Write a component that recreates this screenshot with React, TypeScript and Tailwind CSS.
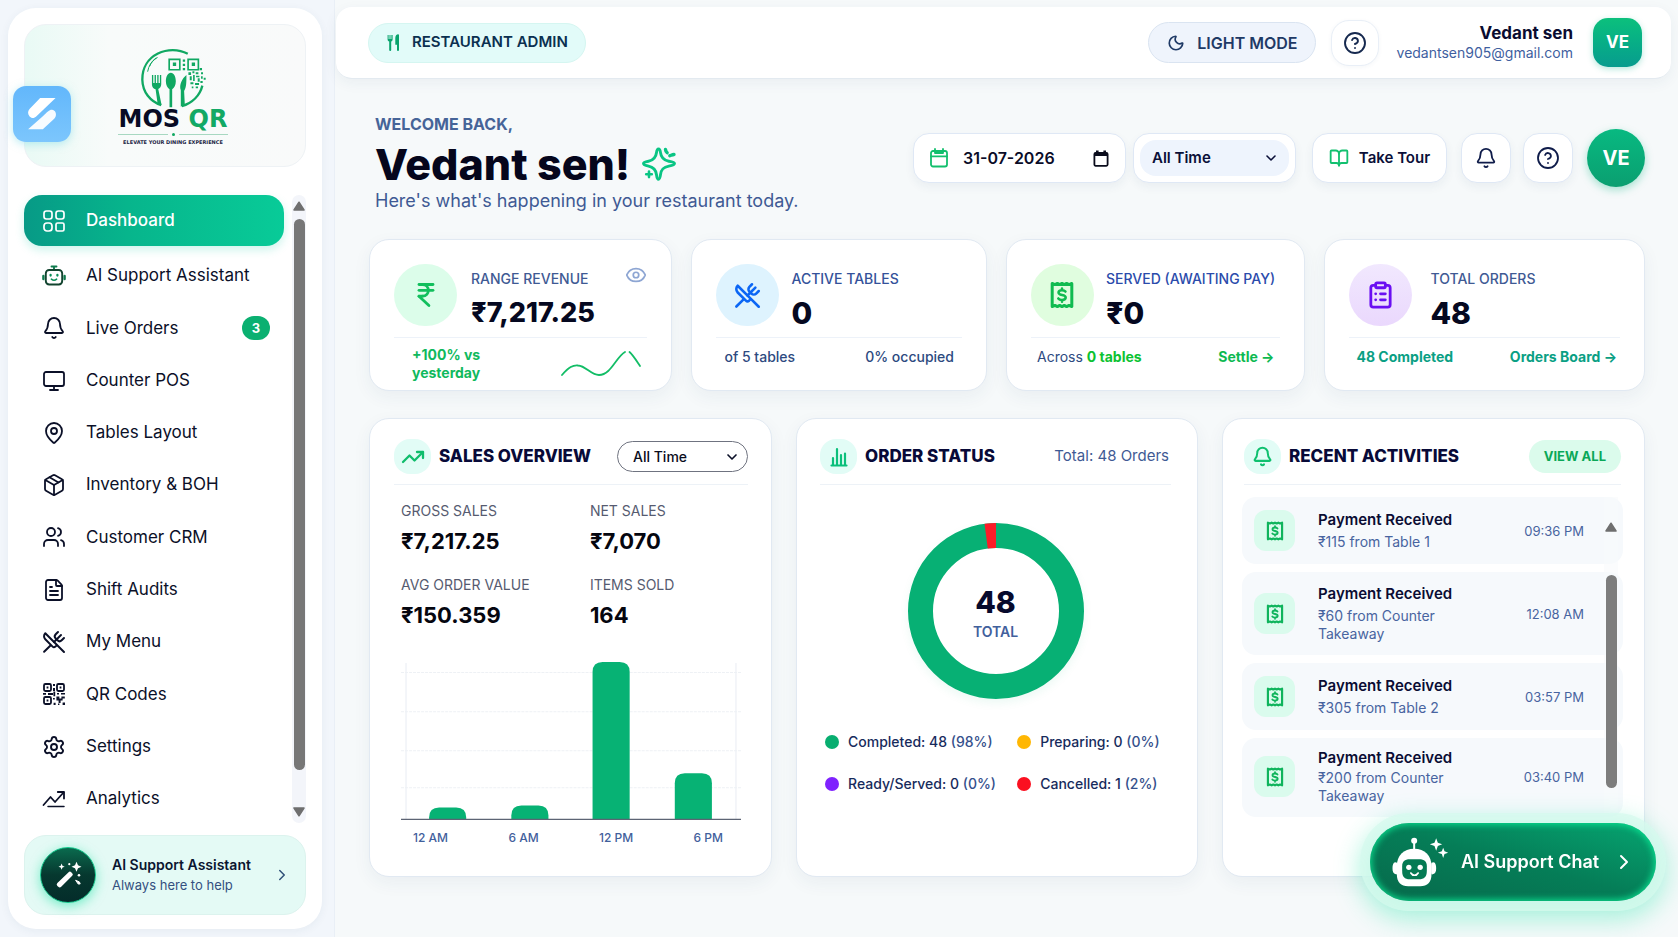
import { useState } from 'react';
import type { ReactNode } from 'react';
import {
  Bell, BookOpen, ChevronDown, ChevronRight, ClipboardList, Eye, FileText, HelpCircle, IndianRupee,
  MapPin, Monitor, Moon, Package, Settings, TrendingUp, Users, UtensilsCrossed,
} from 'lucide-react';

interface Activity {
  id: number;
  detail: string;
  time: string;
  compact?: boolean;
}

const activities: Activity[] = [
  { id: 1, detail: '₹115 from Table 1', time: '09:36 PM' },
  { id: 2, detail: '₹60 from Counter Takeaway', time: '12:08 AM' },
  { id: 3, detail: '₹305 from Table 2', time: '03:57 PM' },
  { id: 4, detail: '₹200 from Counter Takeaway', time: '03:40 PM', compact: true },
];

const salesStats = [
  { label: 'GROSS SALES', value: '₹7,217.25' },
  { label: 'NET SALES', value: '₹7,070' },
  { label: 'AVG ORDER VALUE', value: '₹150.359' },
  { label: 'ITEMS SOLD', value: '164' },
];

const bars = [
  { x: 28, height: 12 },
  { x: 110, height: 14 },
  { x: 191, height: 157 },
  { x: 273, height: 46 },
];

const legend = [
  { label: 'Completed', count: 48, pct: '98%', dot: 'bg-[#08ae70]' },
  { label: 'Preparing', count: 0, pct: '0%', dot: 'bg-[#ffb703]' },
  { label: 'Ready/Served', count: 0, pct: '0%', dot: 'bg-[#7f22fe]' },
  { label: 'Cancelled', count: 1, pct: '2%', dot: 'bg-[#fb1020]' },
];

const timeRanges = ['All Time', 'Today', 'This Week', 'This Month'];

/* ---------- Icons ---------- */

function GridIcon() {
  return (
    <svg viewBox="0 0 22 22" className="w-[22px] h-[22px]" fill="none" stroke="currentColor" strokeWidth="1.7">
      <rect x="1" y="1" width="8" height="8" rx="2.4" />
      <rect x="13" y="1" width="8" height="8" rx="2.4" />
      <rect x="1" y="13" width="8" height="8" rx="3" />
      <rect x="13" y="13" width="8" height="8" rx="1.6" />
    </svg>
  );
}

function BotIcon() {
  return (
    <svg viewBox="0 0 24 24" className="w-6 h-6" fill="none" strokeWidth="1.9" strokeLinecap="round" strokeLinejoin="round">
      <path d="M9.5 2.5h5M12 2.5V6" stroke="#0f7a4d" />
      <rect x="3.8" y="6" width="16.4" height="14.5" rx="3.4" stroke="#12442f" />
      <path d="M1.4 12v3M22.6 12v3" stroke="#0f7a4d" strokeWidth="2.4" />
      <path d="M8.6 11v.6M15.4 11v.6" stroke="#0b8f58" strokeWidth="2.3" />
      <path d="M9.4 15.2c1.5 1.2 3.7 1.2 5.2 0" stroke="#0b8f58" strokeWidth="1.6" />
    </svg>
  );
}

function QrIcon() {
  return (
    <svg viewBox="0 0 22 22" className="w-[22px] h-[22px]" fill="none" stroke="currentColor" strokeWidth="1.8">
      <rect x="1" y="1" width="7" height="7" rx="1.4" />
      <rect x="14" y="1" width="7" height="7" rx="1.4" />
      <rect x="1" y="14" width="7" height="7" rx="1.4" />
      <path
        d="M3.6 3.6h1.8v1.8H3.6zM16.6 3.6h1.8v1.8h-1.8zM3.6 16.6h1.8v1.8H3.6zM10 1h2v2h-2zM10 5h2v3h-2zM0 10h3v1.8H0zM5 10h5v2H5zM10.4 8.6h1.8v4.6h-1.8zM14 10h2v1.6h-2zM18 10h4v1.6h-4zM10 15h1.8v1.6H10zM10.6 19.8h2V22h-2zM13.4 13.4h3v2h2v-2h3.4v2h-2.2v2.2h-2V20h-2v-2.6h-2.2zM19.6 19.6H22V22h-2.4zM15 20.4h1.4V22H15z"
        fill="currentColor"
        stroke="none"
      />
    </svg>
  );
}

function AnalyticsIcon() {
  return (
    <svg viewBox="0 0 24 24" className="w-6 h-6" fill="none" stroke="currentColor" strokeWidth="1.8" strokeLinecap="round" strokeLinejoin="round">
      <path d="M1.500 18 8.500 10l4.500 5L21.500 5.500" />
      <path d="M15.8 5h6.2v6.6" />
      <path d="M6 19.5h16" strokeWidth="1.5" />
    </svg>
  );
}

function ReceiptIcon({ className }: { className: string }) {
  return (
    <svg viewBox="0 0 24 26" className={className} fill="none" stroke="currentColor" strokeWidth="2.6" strokeLinecap="round" strokeLinejoin="round">
      <path d="M3.5 3v20l2.4-1L8 23l2-1 2 1 2-1 2 1 2.1-1 2.4 1V3l-2.4 1L16 3l-2 1-2-1-2 1-2-1-2.100 1Z" />
      <path d="M15 10c-.6-.8-1.700-1.200-3-1.200-1.800 0-3 .8-3 2 0 3 6.200 1.400 6.200 4.400 0 1.400-1.400 2.100-3.200 2.100-1.400 0-2.600-.4-3.200-1.300M12 7.300v1.400M12 17.400v1.400" strokeWidth="2.200" />
    </svg>
  );
}

function WandIcon() {
  return (
    <svg viewBox="0 0 28 28" className="w-7 h-7" fill="white">
      <path d="M14.6 11.200a1.800 1.800 0 0 1 2.600 0l1 1a1.800 1.800 0 0 1 0 2.600L7.200 25.800a2 2 0 0 1-2.900 0l-.9-.9a2 2 0 0 1 0-2.900z" />
      <path d="m7.600 2.600.9 2.200 2.200.9-2.200.9-.9 2.200-.9-2.200-2.200-.9 2.200-.9zM22.500.8l1.500 3.500 3.500 1.500L24 7.300l-1.500 3.500L21 7.300l-3.500-1.500L21 4.300z" />
      <circle cx="15.3" cy="3.2" r="1.1" />
      <circle cx="25" cy="14.2" r="1.3" />
      <path d="m21.600 19.300 3.800 1.600.8 2-1.900.2z" stroke="white" strokeWidth="1" strokeLinejoin="round" />
    </svg>
  );
}

function CutleryIcon() {
  return (
    <svg viewBox="0 0 13 17" className="w-[13px] h-[17px]" fill="#07a36c">
      <path d="M.6 1h1v4h.9V1h1v4h.9V1h1.200v4.500c0 1-.6 1.700-1.400 2V16a.8.8 0 0 1-2 0V7.500C1.200 7.200.6 6.500.6 5.500z" />
      <path d="M12 1.200V16a.9.900 0 0 1-2 0v-5.300H8.300V4C8.300 1.800 9.600.2 11.200.2c.5 0 .8.4.8 1z" />
    </svg>
  );
}

function SparkleIcon() {
  return (
    <svg viewBox="0 0 34 34" className="w-[34px] h-[34px]" fill="none" stroke="#09c584" strokeWidth="2.9" strokeLinecap="round" strokeLinejoin="round">
      <path d="M16.500 2c1.300 0 1.700 1.400 2 3.600.6 5 2.600 7.600 8.300 8.600 3.600.6 5.700 1 5.700 2.400s-2 1.900-5.700 2.500c-5.700 1-7.700 3.500-8.300 8.600-.3 2.300-.7 4.500-2 4.500s-1.700-2.200-2-4.500c-.6-5-2.600-7.600-8-8.600C3 18.500 1.500 18 1.500 16.600s1.500-1.800 5-2.400c5.400-1 7.400-3.600 8-8.600.3-2.200.7-3.600 2-3.600Z" />
      <path d="M23.500 2.500c.2 1.600.7 2.600 1.600 3.200M32 7.500c-2 .2-3 1-4.200 1.200" strokeWidth="3.400" />
      <path d="M7 24.500v5.600M4.200 27.300h5.600" strokeWidth="2.600" />
    </svg>
  );
}

function CalendarIcon() {
  return (
    <svg viewBox="0 0 18 20" className="w-[18px] h-5 shrink-0" fill="none" stroke="#12bf6d" strokeWidth="1.8" strokeLinecap="round">
      <rect x="1" y="3" width="16" height="15.5" rx="2" />
      <path d="M1 8.300h16M5 1v4M13 1v4M5 5h8" />
    </svg>
  );
}

function ColumnsIcon() {
  return (
    <svg viewBox="0 0 18 20" className="w-[18px] h-5" fill="none" stroke="#0bbf7b" strokeWidth="2.2" strokeLinecap="round">
      <path d="M1.500 18.500h15M3 18v-7M7 18V2M11 18V8M15 18V6.500" />
    </svg>
  );
}

function RobotIcon() {
  return (
    <svg viewBox="576 530 170 150" className="w-[57px] h-[50px] shrink-0" fill="white">
      <circle cx="642" cy="541" r="9" />
      <path d="M639 545h6v24h-6zM585 606c5 0 7 2 7 6v24c0 5-2 7-5 6-8-2-10-8-10-18s2-17 8-18zM700 606c-5 0-7 2-7 6v24c0 5 2 7 5 6 8-2 10-8 10-18s-2-17-8-18z" />
      <path d="M642 565c32 0 52 20 52 52v25c0 24-12 36-34 36h-36c-22 0-34-12-34-36v-25c0-32 20-52 52-52z" />
      <path d="M629 597h28c16 0 23 7 23 21v14c0 17-8 25-24 25h-27c-16 0-23-8-23-25v-14c0-14 7-21 23-21z" fill="#057a53" />
      <circle cx="626" cy="621" r="8" />
      <circle cx="660" cy="621" r="8" />
      <path d="M632 638c5 9 17 9 22 0" fill="none" stroke="white" strokeWidth="5" strokeLinecap="round" />
      <path d="m708 534 5 13 13 5-13 5-5 14-5-14-14-5 14-5zM729 562l4 11 11 4-11 4-4 12-4-12-12-4 12-4z" />
    </svg>
  );
}

function Logo() {
  return (
    <div className="flex flex-col items-center font-['DejaVu_Sans'] leading-none">
      <svg viewBox="420 138 202 186" className="w-[67px] h-[62px]" fill="none" stroke="#10a862">
        <path d="M564 158C508 128 426 160 427 236c1 38 24 66 57 77" strokeWidth="7" />
        <path d="M608 254c-7 28-29 52-62 62" strokeWidth="7" />
        <path d="M443 212c3-18 12-32 26-42M449 196c4-11 12-20 24-27" strokeWidth="3" />
        <g fill="#10a862" stroke="none">
          <path d="M456 222h4v24h4v-24h4v24h4v-24h4v24h4v-24h4v28c0 7-4 12-9 14l10 48-12-4-6-43c-6-2-11-7-11-14z" />
          <path d="M513 215c9 0 15 12 15 26 0 12-5 21-11 24v54h-8v-54c-6-3-11-12-11-24 0-14 6-26 15-26z" />
          <path d="M560 222c0 22 0 38-7 48l2 40-12 8v-50c-6-16 4-36 17-46z" />
          <path d="M549 175h7v7h-7zM549 188h7v7h-7zM549 201h7v7h-7zM566 214h8v8h-8zM578 211h6v6h-6zM588 214h8v6h-8zM600 201h7v7h-7zM604 214h6v6h-6zM570 226h6v12h-6zM580 222h5v18h-5zM589 224h10v5h-10zM594 232h6v10h-6zM604 226h5v7h-5zM612 230h6v6h-6zM572 244h9v6h-9zM586 246h12v6h-12zM602 240h7v6h-7zM576 257h5v5h-5zM588 257h7v5h-7z" />
          <path d="M519 184h10v11h-10zM576 184h10v11h-10z" />
        </g>
        <path d="M508 175h32v31h-32zM565 175h31v31h-31z" strokeWidth="5" />
      </svg>
      <div className="text-2xl leading-5 font-bold text-[#070b24]">
        MOS <span className="text-[#12a965]">QR</span>
      </div>
      <div className="mt-1 flex items-center gap-1 w-[110px]">
        <span className="flex-1 h-px bg-[#a7d8c1]" />
        <span className="w-[3px] h-[3px] rounded-full bg-[#10a862]" />
        <span className="flex-1 h-px bg-[#a7d8c1]" />
      </div>
      <div className="mt-1 text-[5px] font-bold text-[#1c2545]">ELEVATE YOUR DINING EXPERIENCE</div>
    </div>
  );
}

/* ---------- Shared parts ---------- */

function NavItem({ icon, label, badge }: { icon: ReactNode; label: string; badge?: number }) {
  return (
    <a href="#" className="flex-1 min-h-11 flex items-center pl-[18px] pr-[14px] rounded-2xl text-[#0b1028] hover:bg-slate-50">
      <span className="w-6 flex justify-center">{icon}</span>
      <span className="ml-5 text-[17px] font-normal">{label}</span>
      {badge && (
        <span className="ml-auto h-6 w-7 rounded-full bg-[#0bb071] text-white text-[13px] font-bold flex items-center justify-center">{badge}</span>
      )}
    </a>
  );
}

function StatCard({ icon, label, labelColor, value, small, gap, children, action }: {
  icon: ReactNode;
  label: string;
  labelColor: string;
  value: string;
  small?: boolean;
  gap: string;
  children: ReactNode;
  action?: ReactNode;
}) {
  return (
    <div className="bg-white rounded-[20px] border border-[#e1e9f2] shadow-[0_6px_18px_rgba(40,70,110,0.06)] px-6 pt-6">
      <div className={`flex ${gap}`}>
        {icon}
        <div className="flex-1 min-w-0 pt-[5px]">
          <div className={`text-sm leading-5 font-medium whitespace-nowrap ${labelColor}`}>{label}</div>
          <div className={`mt-2 leading-8 font-extrabold text-[#050820] ${small ? 'text-[27px]' : 'text-[30px]'}`}>{value}</div>
        </div>
        {action}
      </div>
      <div className="mt-2 border-t border-[#edf2f9]">{children}</div>
    </div>
  );
}

function PanelHeader({ icon, title, children }: { icon: ReactNode; title: string; children: ReactNode }) {
  return (
    <div className="flex items-center justify-between pb-2.5 border-b border-[#edf2f7]">
      <div className="flex items-center gap-2 h-[35px]">
        <span className="w-[37px] h-[35px] rounded-2xl bg-[#e2fcf6] flex items-center justify-center">{icon}</span>
        <h2 className="text-[17px] font-extrabold text-[#080a38] whitespace-nowrap">{title}</h2>
      </div>
      {children}
    </div>
  );
}

function ArrowUp() {
  return (
    <svg viewBox="0 0 12 10" className="w-3 h-2.5" fill="#6f6f6f" stroke="#6f6f6f" strokeWidth="1.5" strokeLinejoin="round">
      <path d="M6 1.200 11 9H1z" />
    </svg>
  );
}

export default function App() {
  const [date, setDate] = useState('31-07-2026');
  const [range, setRange] = useState('All Time');
  const [salesRange, setSalesRange] = useState('All Time');

  return (
    <div className="min-h-screen flex bg-[#f6f9fa] font-[Inter,sans-serif] text-[#0b1028]">
      {/* Sidebar */}
      <aside className="w-[335px] shrink-0 p-2 pr-3 bg-[#f2f6fb] border-r border-[#e9eff6] flex">
        <div className="relative flex-1 flex flex-col bg-white rounded-[28px] px-4 pt-4 pb-[14px] shadow-[0_2px_10px_rgba(40,70,110,0.06)]">
          <div className="h-[143px] rounded-[22px] border border-[#eef2f5] bg-linear-to-r from-[#e9faf5] via-[#f8fbfa] via-30% to-[#f9fafa] flex items-center justify-center pl-4">
            <Logo />
          </div>
          <button aria-label="Open shortcuts" className="absolute left-[5px] top-[78px] w-[58px] h-[56px] rounded-[13px] bg-linear-to-b from-[#62b7fb] to-[#7cc6fd] shadow-[0_2px_8px_rgba(120,220,230,0.5)]">
            <svg viewBox="40 258 173 167" className="w-full h-full" fill="white">
              <path d="M121 294h46l-57 54c-7 7-15 7-21 0-6-8-5-15 1-22z" />
              <path d="M129 348c14-13 20-20 28-19 12 2 15 18 6 27l-34 31H85z" fillOpacity="0.94" />
            </svg>
          </button>

          <div className="mt-7 flex-1 flex">
            <nav className="flex-1 flex flex-col mb-[10px]">
              <a href="#" className="h-[51px] mb-1 shrink-0 flex items-center pl-[18px] rounded-[18px] text-white bg-linear-to-r from-[#079a86] via-[#07b58c] via-40% to-[#08cb98] shadow-[0_4px_10px_rgba(10,200,160,0.2)]">
                <span className="w-6 flex justify-center"><GridIcon /></span>
                <span className="ml-5 text-[17px] font-medium">Dashboard</span>
              </a>
              <NavItem icon={<BotIcon />} label="AI Support Assistant" />
              <NavItem icon={<Bell className="w-6 h-6" strokeWidth={1.8} />} label="Live Orders" badge={3} />
              <NavItem icon={<Monitor className="w-6 h-6" strokeWidth={1.8} />} label="Counter POS" />
              <NavItem icon={<MapPin className="w-6 h-6" strokeWidth={1.8} />} label="Tables Layout" />
              <NavItem icon={<Package className="w-6 h-6" strokeWidth={1.8} />} label="Inventory & BOH" />
              <NavItem icon={<Users className="w-6 h-6" strokeWidth={1.8} />} label="Customer CRM" />
              <NavItem icon={<FileText className="w-6 h-6" strokeWidth={1.8} />} label="Shift Audits" />
              <NavItem icon={<UtensilsCrossed className="w-6 h-6" strokeWidth={2} />} label="My Menu" />
              <NavItem icon={<QrIcon />} label="QR Codes" />
              <NavItem icon={<Settings className="w-6 h-6" strokeWidth={1.9} />} label="Settings" />
              <NavItem icon={<AnalyticsIcon />} label="Analytics" />
            </nav>
            <div aria-hidden="true" className="ml-2 w-[14px] mb-3 py-1.5 rounded-full bg-[#f3f5fa] flex flex-col items-center">
              <ArrowUp />
              <div className="mt-2 w-[11px] grow-[15] rounded-full bg-[#777777]" />
              <div className="grow" />
              <span className="rotate-180"><ArrowUp /></span>
            </div>
          </div>

          <a href="#" className="h-20 rounded-[22px] border border-[#dcf3ee] bg-[#e4faf5] flex items-center pl-[15px] pr-3.5">
            <span className="w-14 h-14 rounded-full bg-linear-to-b from-[#0a6b4e] via-[#06382f] to-[#042c2a] border border-[#12c98c] shadow-[0_3px_12px_rgba(20,225,160,0.55)] flex items-center justify-center">
              <WandIcon />
            </span>
            <span className="ml-4 flex-1">
              <span className="block text-sm leading-5 font-semibold text-[#0a1530] whitespace-nowrap">AI Support Assistant</span>
              <span className="block text-[13px] leading-5 text-[#345080]">Always here to help</span>
            </span>
            <ChevronRight className="w-[18px] h-[18px] text-[#2f5078]" />
          </a>
        </div>
      </aside>

      <div className="flex-1 min-w-0">
        {/* Top bar */}
        <header className="ml-px mt-[7px] mr-[7px] h-[72px] pl-8 pr-[29px] bg-white rounded-2xl border-b border-[#e3eaf0] shadow-[0_4px_14px_rgba(40,70,110,0.06)] flex items-center justify-between">
          <div className="h-10 pl-[18px] pr-[17px] rounded-full bg-[#e2fbf9] border border-[#d5f6f1] flex items-center gap-3">
            <CutleryIcon />
            <span className="text-[15px] font-semibold text-[#0b3050] whitespace-nowrap">RESTAURANT ADMIN</span>
          </div>
          <div className="flex items-center">
            <button className="h-[41px] pl-[18px] pr-[17px] rounded-full bg-[#eff4fc] border border-[#dae4f1] flex items-center gap-3 text-[#1f3a66]">
              <Moon className="w-[18px] h-[18px]" strokeWidth={2.2} />
              <span className="text-base font-semibold whitespace-nowrap">LIGHT MODE</span>
            </button>
            <button aria-label="Help" className="ml-[15px] w-12 h-[46px] rounded-[18px] bg-white border border-[#e9eff7] shadow-[0_1px_4px_rgba(40,70,110,0.05)] flex items-center justify-center text-[#16294f]">
              <HelpCircle className="w-6 h-6" strokeWidth={1.9} />
            </button>
            <div className="ml-[18px] text-right">
              <div className="text-[17px] leading-5 font-bold text-[#0a0c30]">Vedant sen</div>
              <div className="text-sm leading-5 text-[#3f5f9f]">vedantsen905@gmail.com</div>
            </div>
            <div className="ml-5 w-[49px] h-[49px] rounded-[15px] bg-linear-to-b from-[#0cc07c] to-[#089c8e] text-white text-[17px] font-bold flex items-center justify-center shadow-[0_2px_6px_rgba(10,180,140,0.3)]">VE</div>
          </div>
        </header>

        <main className="px-[34px] pt-[33px] pb-10 pr-[33px]">
          {/* Welcome */}
          <div className="flex items-start justify-between">
            <div className="pl-1.5">
              <p className="text-base leading-6 font-bold text-[#466498]">WELCOME BACK,</p>
              <div className="flex items-center gap-3 h-[53px] pt-0.5">
                <h1 className="text-[43px] leading-[52px] font-extrabold text-[#05061c] whitespace-nowrap">Vedant sen!</h1>
                <SparkleIcon />
              </div>
              <p className="text-lg leading-6 text-[#3f5a94] whitespace-nowrap">Here's what's happening in your restaurant today.</p>
            </div>
            <div className="flex items-center pt-[17px]">
              <div className="w-[213px] h-[50px] px-4 rounded-2xl bg-white border border-[#dfe8f5] shadow-[0_4px_10px_rgba(40,70,110,0.06)] flex items-center">
                <CalendarIcon />
                <input
                  aria-label="Date"
                  value={date}
                  onChange={e => setDate(e.target.value)}
                  className="ml-[15px] flex-1 min-w-0 bg-transparent text-base font-semibold text-[#0a0c28] outline-none"
                />
                <button aria-label="Pick a date">
                  <svg viewBox="0 0 16 17" className="w-4 h-[17px]" fill="none" stroke="#0a0c1c" strokeWidth="1.8">
                    <rect x="1.4" y="3" width="13.2" height="12.8" rx="1.2" />
                    <path d="M1 4.800h14M4.300.5v3M11.700.5v3" strokeWidth="2.6" />
                  </svg>
                </button>
              </div>
              <div className="ml-[7px] p-1.5 w-[163px] h-[50px] rounded-2xl bg-white border border-[#dfe8f5] shadow-[0_4px_10px_rgba(40,70,110,0.06)]">
                <div className="relative h-full">
                  <select
                    aria-label="Time range"
                    value={range}
                    onChange={e => setRange(e.target.value)}
                    className="appearance-none w-full h-full pl-3 rounded-2xl bg-[#eef4fd] text-[15px] font-semibold text-[#0a0f38]"
                  >
                    {timeRanges.map(r => <option key={r}>{r}</option>)}
                  </select>
                  <ChevronDown className="absolute right-2.5 top-1/2 -translate-y-1/2 w-4 h-4 text-[#0a0f38] pointer-events-none" strokeWidth={2.4} />
                </div>
              </div>
              <button className="ml-4 w-[135px] h-[50px] rounded-2xl bg-white border border-[#dfe8f5] shadow-[0_4px_10px_rgba(40,70,110,0.06)] flex items-center justify-center gap-2.5">
                <BookOpen className="w-5 h-5 text-[#12c06f]" strokeWidth={2.2} />
                <span className="text-[15px] font-semibold text-[#0a0f38] whitespace-nowrap">Take Tour</span>
              </button>
              <button aria-label="Notifications" className="ml-3.5 w-[50px] h-[50px] rounded-2xl bg-white border border-[#dfe8f5] shadow-[0_4px_10px_rgba(40,70,110,0.06)] flex items-center justify-center text-[#0f1c4a]">
                <Bell className="w-[22px] h-[22px]" strokeWidth={2} />
              </button>
              <button aria-label="Help" className="ml-3 w-[50px] h-[50px] rounded-2xl bg-white border border-[#dfe8f5] shadow-[0_4px_10px_rgba(40,70,110,0.06)] flex items-center justify-center text-[#0f1c4a]">
                <HelpCircle className="w-6 h-6" strokeWidth={1.8} />
              </button>
              <div className="ml-3.5 w-[58px] h-[58px] rounded-full bg-linear-to-b from-[#08b981] to-[#0a9f70] text-white text-xl font-bold flex items-center justify-center shadow-[0_3px_8px_rgba(10,180,130,0.35)]">VE</div>
            </div>
          </div>

          {/* Stat cards */}
          <div className="mt-[26px] grid grid-cols-[303fr_295fr_299fr_320fr] gap-[19px]">
            <StatCard
              icon={<span className="w-[63px] h-[62px] shrink-0 rounded-full bg-[#dcfdea] flex items-center justify-center text-[#12bf5d]"><IndianRupee className="w-7 h-7" strokeWidth={2.4} /></span>}
              label="RANGE REVENUE"
              labelColor="text-[#3f5a94]"
              value="₹7,217.25"
              small
              gap="gap-3.5"
              action={<button aria-label="Hide revenue" className="self-start -ml-8 text-[#8ea6d3]"><Eye className="w-[22px] h-[22px]" strokeWidth={1.9} /></button>}
            >
              <div className="h-[52px] pl-[18px] pr-1.5 flex items-center justify-between">
                <span className="w-20 text-sm leading-[18px] font-bold text-[#10b95d]">+100% vs yesterday</span>
                <svg viewBox="0 0 80 26" className="w-20 h-[26px]" fill="none" stroke="#12bd66" strokeWidth="1.8" strokeLinecap="round">
                  <path d="M1 24C8 16 12 14 17 14.500 25 15 30 24 38 24 50 24 55 6 64 1M68.500 1C72 4 75 9 79 15" />
                </svg>
              </div>
            </StatCard>
            <StatCard
              icon={<span className="w-[63px] h-[62px] shrink-0 rounded-full bg-[#def3fe] flex items-center justify-center text-[#0b66f5]"><UtensilsCrossed className="w-[27px] h-[27px]" strokeWidth={2.3} /></span>}
              label="ACTIVE TABLES"
              labelColor="text-[#34529a]"
              value="0"
              gap="gap-3"
            >
              <div className="h-[38px] px-2 flex items-center justify-between text-sm font-medium text-[#2d4a80]">
                <span>of 5 tables</span>
                <span>0% occupied</span>
              </div>
            </StatCard>
            <StatCard
              icon={<span className="w-[63px] h-[62px] shrink-0 rounded-full bg-[#e0fddf] flex items-center justify-center text-[#10bb50]"><ReceiptIcon className="w-7 h-[30px]" /></span>}
              label="SERVED (AWAITING PAY)"
              labelColor="text-[#2b4bab]"
              value="₹0"
              gap="gap-3"
            >
              <div className="h-[38px] pl-1.5 pr-1.5 flex items-center justify-between text-sm text-[#2d4a80] whitespace-nowrap">
                <span>Across <b className="font-bold text-[#0cc232]">0 tables</b></span>
                <a href="#" className="font-bold text-[#0cb950]">Settle →</a>
              </div>
            </StatCard>
            <StatCard
              icon={<span className="w-[63px] h-[62px] shrink-0 rounded-full bg-linear-to-b from-[#f1e8fe] to-[#ead8fd] flex items-center justify-center text-[#6a0ff2]"><ClipboardList className="w-[29px] h-[30px]" strokeWidth={2.3} /></span>}
              label="TOTAL ORDERS"
              labelColor="text-[#3f5a94]"
              value="48"
              gap="gap-[18px]"
            >
              <div className="h-[38px] pl-[7px] pr-[3px] flex items-center justify-between text-sm font-bold text-[#0a9f84] whitespace-nowrap">
                <span>48 Completed</span>
                <a href="#">Orders Board →</a>
              </div>
            </StatCard>
          </div>

          {/* Panels */}
          <div className="mt-[27px] grid grid-cols-[403fr_402fr_423fr] gap-6">
            <section className="bg-white rounded-[20px] border border-[#e1e9f2] shadow-[0_6px_18px_rgba(40,70,110,0.06)] pl-6 pr-[23px] pt-5 pb-7">
              <PanelHeader icon={<TrendingUp className="w-6 h-6 text-[#10bd6c]" strokeWidth={2.3} />} title="SALES OVERVIEW">
                <div className="relative">
                  <select
                    aria-label="Sales range"
                    value={salesRange}
                    onChange={e => setSalesRange(e.target.value)}
                    className="appearance-none w-[131px] h-[31px] pl-[15px] rounded-full bg-white border border-[#6f7380] text-sm font-medium text-[#0a0c1c]"
                  >
                    {timeRanges.map(r => <option key={r}>{r}</option>)}
                  </select>
                  <ChevronDown className="absolute right-2 top-1/2 -translate-y-1/2 w-4 h-4 pointer-events-none" strokeWidth={2.5} />
                </div>
              </PanelHeader>
              <div className="mt-4 px-[7px] grid grid-cols-[5fr_4fr] gap-y-5">
                {salesStats.map(s => (
                  <div key={s.label}>
                    <div className="text-sm leading-5 text-[#565b70]">{s.label}</div>
                    <div className="mt-1.5 text-[22px] leading-7 font-bold text-[#05060f]">{s.value}</div>
                  </div>
                ))}
              </div>
              <div className="mt-[33px] px-[7px]">
                <svg viewBox="0 0 339 158" className="w-full" fill="none">
                  <path d="M5 1v156M334 1v156" stroke="#e9edf3" />
                  <path d="M0 10.500h339M0 49.500h339M0 88.500h339M0 125.500h339" stroke="#eef1f5" strokeDasharray="3 1" />
                  {bars.map(b => {
                    const r = Math.min(10, b.height);
                    const top = 157 - b.height;
                    return (
                      <path
                        key={b.x}
                        d={`M${b.x} 157V${top + r}Q${b.x} ${top} ${b.x + r} ${top}H${b.x + 37 - r}Q${b.x + 37} ${top} ${b.x + 37} ${top + r}V157Z`}
                        fill="#07b274"
                      />
                    );
                  })}
                  <path d="M0 157h339" stroke="#5d6474" strokeWidth="1.5" />
                </svg>
                <div className="mt-2 pl-3 pr-[18px] flex justify-between text-xs leading-5 font-medium text-[#42609c]">
                  <span>12 AM</span>
                  <span>6 AM</span>
                  <span>12 PM</span>
                  <span>6 PM</span>
                </div>
              </div>
            </section>

            <section className="bg-white rounded-[20px] border border-[#e1e9f2] shadow-[0_6px_18px_rgba(40,70,110,0.06)] pl-[23px] pr-[26px] pt-5 pb-7">
              <PanelHeader icon={<ColumnsIcon />} title="ORDER STATUS">
                <span className="pr-0.5 text-[15px] text-[#3f5a94] whitespace-nowrap">Total: 48 Orders</span>
              </PanelHeader>
              <div className="relative mt-[38px] mx-auto w-[176px] h-[176px] rounded-full shadow-[0_4px_10px_rgba(10,180,120,0.08)]">
                <svg viewBox="0 0 176 176" className="w-full h-full -rotate-90" fill="none" strokeWidth="25">
                  <circle cx="88" cy="88" r="75.5" stroke="#07b074" />
                  <circle cx="88" cy="88" r="75.5" stroke="#fb1c28" pathLength="100" strokeDasharray="2.1 97.9" strokeDashoffset="-97.9" />
                </svg>
                <div className="absolute inset-0 pt-1 flex flex-col items-center justify-center gap-0.5">
                  <span className="text-[30px] leading-9 font-extrabold text-[#070a2c]">48</span>
                  <span className="text-sm leading-5 font-semibold text-[#42609c]">TOTAL</span>
                </div>
              </div>
              <ul className="mt-[31px] pl-[5px] grid grid-cols-[5fr_4fr] gap-y-[18px]">
                {legend.map(l => (
                  <li key={l.label} className="flex items-center gap-[9px] text-sm leading-6 font-medium text-[#172b5c] whitespace-nowrap">
                    <span className={`w-3.5 h-3.5 rounded-full ${l.dot}`} />
                    <span>{l.label}: {l.count} <span className="text-[#35508c]">({l.pct})</span></span>
                  </li>
                ))}
              </ul>
            </section>

            <section className="bg-white rounded-[20px] border border-[#e1e9f2] shadow-[0_6px_18px_rgba(40,70,110,0.06)] px-[21px] pt-5 pb-7">
              <div className="pr-0.5">
                <PanelHeader icon={<Bell className="w-[21px] h-[21px] text-[#0fc06f]" strokeWidth={2.3} />} title="RECENT ACTIVITIES">
                  <button className="h-[33px] px-[15px] rounded-full bg-[#dbfbec] text-[13px] font-bold text-[#0aa858] whitespace-nowrap">VIEW ALL</button>
                </PanelHeader>
              </div>
              <div className="relative mt-3 -ml-0.5">
                <ul className="flex flex-col gap-2">
                  {activities.map(a => (
                    <li
                      key={a.id}
                      className={`min-h-[67px] rounded-[14px] bg-[#f6f9fc] pl-3 pr-[39px] flex items-center ${a.compact ? 'pt-2.5 pb-3' : 'py-3'}`}
                    >
                      <span className="w-[41px] h-[41px] shrink-0 rounded-xl bg-[#dafbed] flex items-center justify-center text-[#0fb45c]">
                        <ReceiptIcon className="w-5 h-[22px]" />
                      </span>
                      <div className={`ml-[23px] flex-1 min-w-0 flex flex-col ${a.compact ? 'gap-px' : 'gap-[3px]'}`}>
                        <span className="text-[15px] leading-5 font-semibold text-[#0a0c33]">Payment Received</span>
                        <span className="max-w-[140px] text-sm leading-[18px] text-[#4864a0]">{a.detail}</span>
                      </div>
                      <span className="text-[13px] leading-5 text-[#4864a0]">{a.time}</span>
                    </li>
                  ))}
                </ul>
                <div aria-hidden="true" className="absolute right-[5px] inset-y-0 w-[14px] pt-[25px] flex flex-col items-center bg-[#f8fafc]/60">
                  <ArrowUp />
                  <div className="mt-[43px] mb-[29px] flex-1 w-[11px] rounded-full bg-[#7d7d7d]" />
                </div>
              </div>
            </section>
          </div>
        </main>
      </div>

      {/* Floating chat button */}
      <button className="fixed right-[22px] bottom-9 h-[78px] w-[286px] pl-[22px] pr-5 rounded-full bg-linear-to-tr from-[#07694b] via-[#057d57] to-[#06a571] shadow-[0_0_0_10px_rgba(214,250,238,0.75),0_8px_26px_10px_rgba(40,230,170,0.4),inset_0_0_6px_2px_rgba(10,235,150,0.8)] flex items-center text-white">
        <RobotIcon />
        <span className="ml-3 text-lg font-semibold whitespace-nowrap">AI Support Chat</span>
        <ChevronRight className="ml-auto w-6 h-6" strokeWidth={2} />
      </button>
    </div>
  );
}
